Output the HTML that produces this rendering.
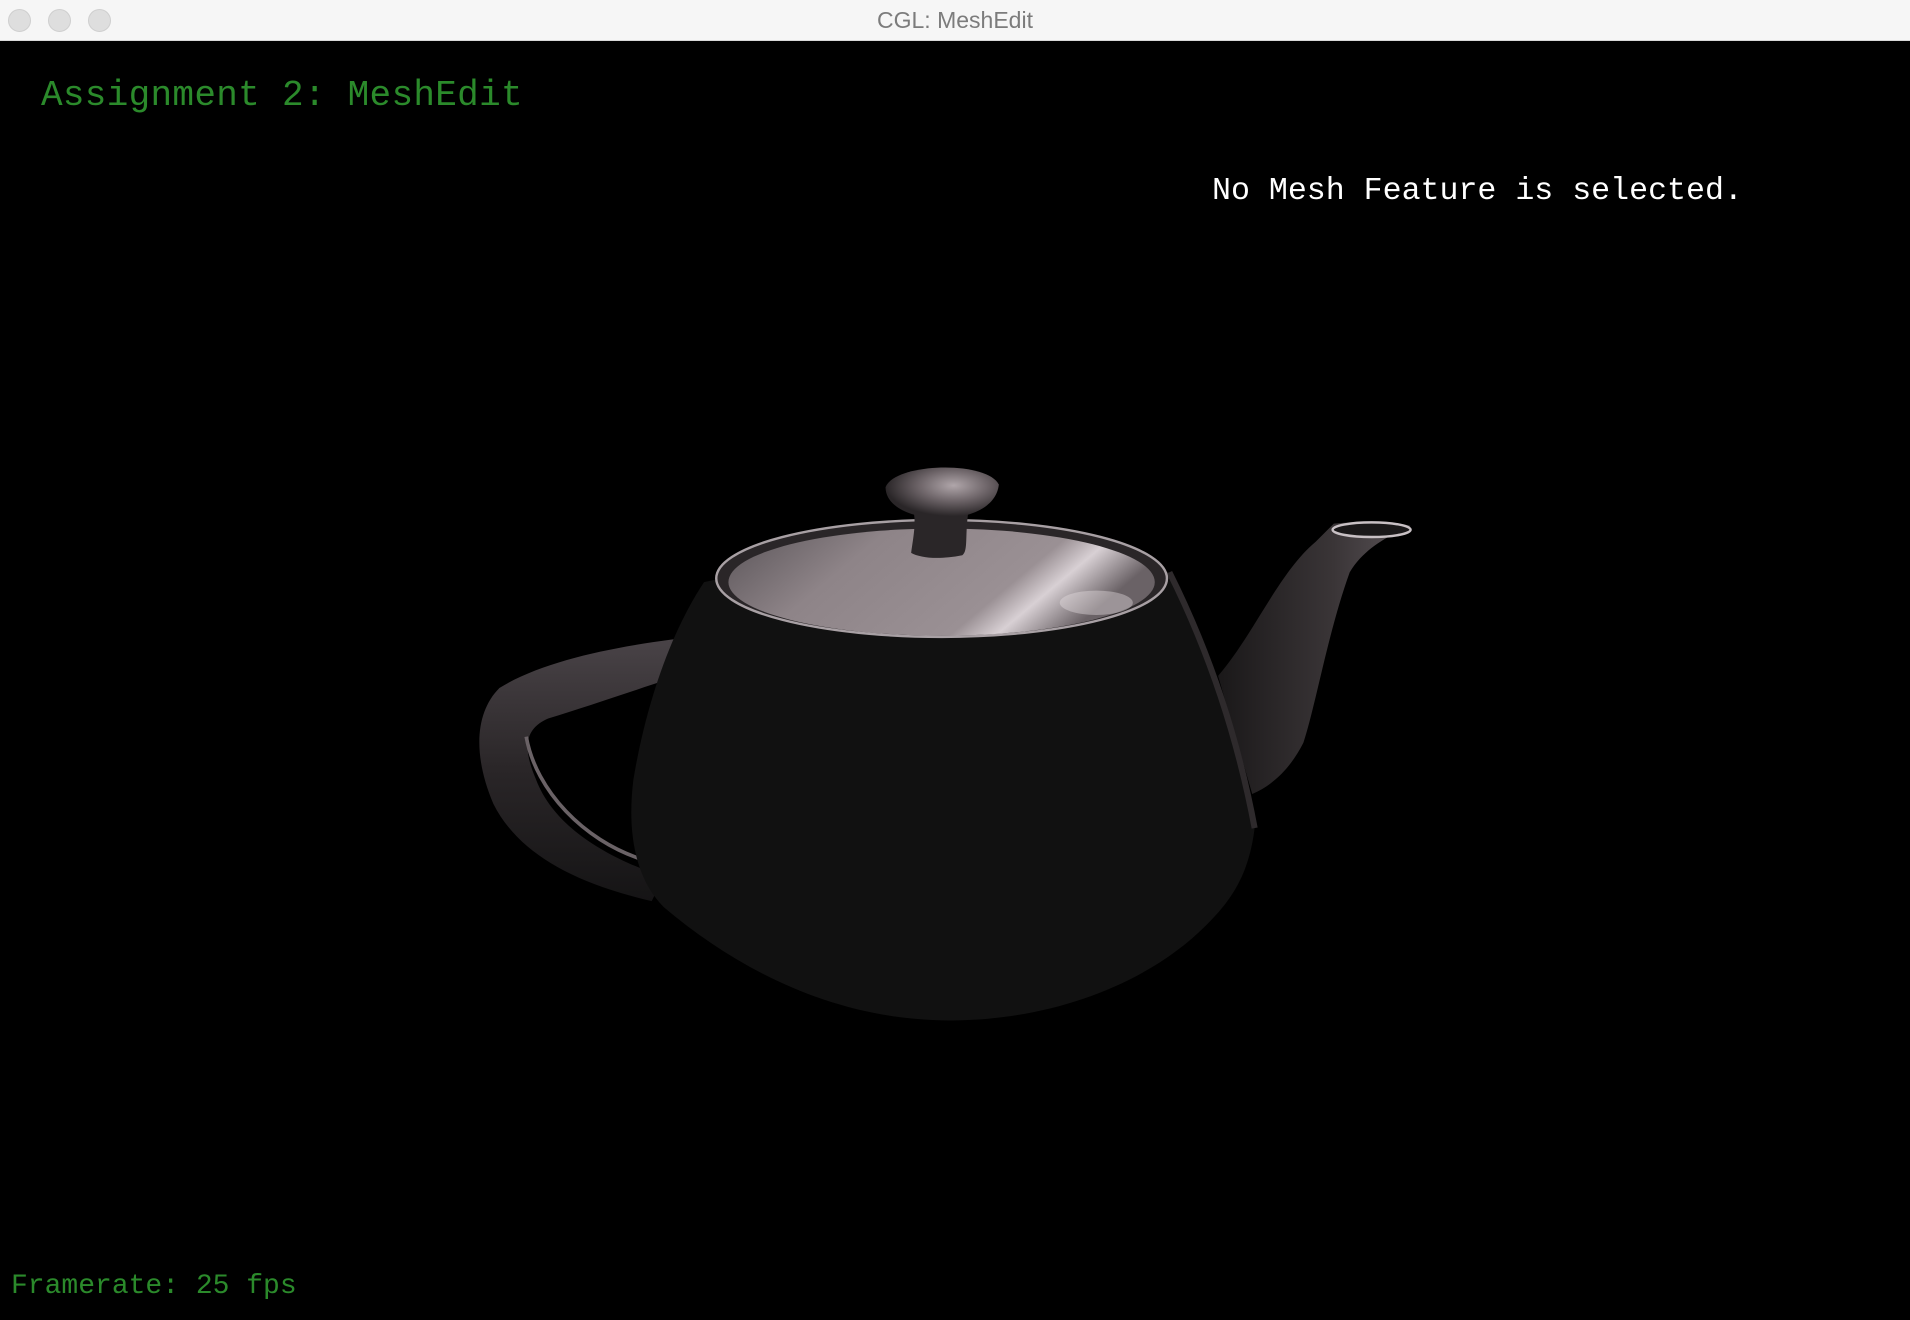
<!DOCTYPE html>
<html><head><meta charset="utf-8"><style>
html,body{margin:0;padding:0;background:#000;width:1910px;height:1320px;overflow:hidden;position:relative;font-family:"Liberation Mono",monospace}
.bar{position:absolute;left:0;top:0;width:1910px;height:41px;background:#f6f6f6;border-bottom:1px solid #d8d8d8;box-sizing:border-box}
.dot{position:absolute;top:9px;width:23px;height:23px;border-radius:50%;background:#dedede;border:1px solid #cfcfcf;box-sizing:border-box}
.ttl{position:absolute;top:0;left:0;width:1910px;text-align:center;line-height:41px;font-family:"Liberation Sans",sans-serif;font-size:23px;color:#7c7c7c}
.t{position:absolute;white-space:pre;line-height:1}
svg{position:absolute;left:0;top:0}
</style></head><body>
<svg width="1910" height="1320" viewBox="0 0 1568 1084" preserveAspectRatio="none">
<defs>
<linearGradient id="lid" x1="0" y1="0" x2="1" y2="0.3">
<stop offset="0" stop-color="#5a5458"/><stop offset="0.35" stop-color="#8e8488"/><stop offset="0.75" stop-color="#9a9094"/><stop offset="0.85" stop-color="#d8d0d4"/><stop offset="1" stop-color="#6a6266"/></linearGradient>
<linearGradient id="hd" x1="0" y1="0" x2="0" y2="1">
<stop offset="0" stop-color="#4a4448"/><stop offset="0.5" stop-color="#2a2628"/><stop offset="1" stop-color="#151415"/></linearGradient>
<linearGradient id="sp" x1="0" y1="0" x2="1" y2="0">
<stop offset="0" stop-color="#1a1819"/><stop offset="0.6" stop-color="#3a3537"/><stop offset="1" stop-color="#5a5357"/></linearGradient>
<radialGradient id="kn" cx="0.6" cy="0.35" r="0.6"><stop offset="0" stop-color="#b0a6aa"/><stop offset="0.5" stop-color="#6e6569"/><stop offset="1" stop-color="#2a2628"/></radialGradient>
</defs>
<path d="M580,522 C520,528 450,540 410,565 C390,585 388,620 405,660 C425,700 470,725 535,740 L545,720 C500,705 455,680 440,640 C428,612 432,598 450,590 C490,578 540,560 580,548 Z" fill="url(#hd)"/>
<path d="M432,605 C440,650 480,690 525,705" stroke="#6a6266" stroke-width="3" fill="none"/>
<path d="M1000,555 C1030,520 1050,470 1080,445 L1095,430 C1120,428 1145,428 1158,432 C1140,440 1120,450 1108,470 C1090,520 1080,580 1070,610 C1060,630 1045,645 1028,652 Z" fill="url(#sp)"/>
<ellipse cx="1126" cy="435" rx="32" ry="6" fill="#1a1819" stroke="#c8c0c4" stroke-width="2"/>
<path d="M578,478 C680,455 860,452 960,470 C990,530 1015,600 1030,680 C1025,720 1010,740 990,760 C940,810 860,838 780,838 C690,838 610,800 545,745 C520,720 515,680 520,640 C530,580 550,520 578,478 Z" fill="#111"/>
<path d="M960,470 C990,530 1015,600 1030,680" stroke="#2e2a2c" stroke-width="5" fill="none"/>
<ellipse cx="773" cy="475" rx="185" ry="48" fill="#2a2628" stroke="#a8a0a4" stroke-width="2"/>
<ellipse cx="773" cy="478" rx="175" ry="44" fill="url(#lid)"/>
<ellipse cx="900" cy="495" rx="30" ry="10" fill="#e8e2e4" opacity="0.4"/>
<path d="M750,420 L795,420 C792,440 795,452 790,456 C770,460 755,458 748,454 C750,440 752,430 750,420 Z" fill="#2a2628"/>
<path d="M727,400 C735,380 810,378 820,398 C818,415 800,425 773,426 C745,425 727,415 727,400 Z" fill="url(#kn)"/>
</svg>
<div class="bar">
<div class="dot" style="left:8px"></div><div class="dot" style="left:48px"></div><div class="dot" style="left:88px"></div>
<div class="ttl">CGL: MeshEdit</div>
</div>
<div class="t" style="left:41px;top:78px;font-size:36px;letter-spacing:0.3px;color:#2b8a2b">Assignment 2: MeshEdit</div>
<div class="t" style="left:1212px;top:176px;font-size:31.6px;color:#fff">No Mesh Feature is selected.</div>
<div class="t" style="left:11px;top:1273px;font-size:28px;color:#2b8a2b">Framerate: 25 fps</div>
</body></html>
